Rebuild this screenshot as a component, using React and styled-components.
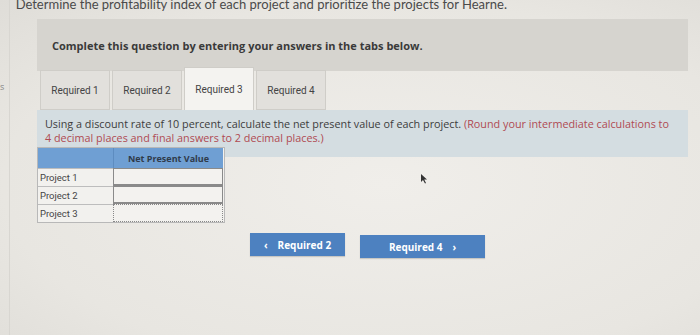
import React from 'react';
import styled, { createGlobalStyle } from 'styled-components';

const Global = createGlobalStyle`
  html, body { margin: 0; padding: 0; }
  body {
    width: 700px;
    height: 335px;
    overflow: hidden;
    background: #e9e7e2;
    font-family: 'Open Sans', 'Liberation Sans', sans-serif;
  }
`;

const Page = styled.div`
  position: relative;
  width: 700px;
  height: 335px;
  overflow: hidden;
  display: flex;
  background: radial-gradient(ellipse at 55% 55%, #f0eeea 0%, #e8e6e1 70%, #dfddd8 100%);
`;

const SideStrip = styled.div`
  width: 10px;
  flex-shrink: 0;
  border-right: 1px solid #d8d6d1;
  display: flex;
  align-items: flex-start;
  padding-top: 80px;
  box-sizing: border-box;
  font-size: 9px;
  color: #888;
`;

const Main = styled.div`
  flex: 1;
  display: flex;
  flex-direction: column;
  padding-left: 27px;
`;

const Intro = styled.div`
  margin-top: -4px;
  width: 470px;
  height: 15px;
  display: flex;
  justify-content: flex-end;
  font-family: 'Lato', 'Open Sans', sans-serif;
  font-size: 13px;
  color: #4a4a4a;
  white-space: nowrap;
`;

const Banner = styled.div`
  margin-top: 8px;
  width: 651px;
  height: 52px;
  background: #d6d4cf;
  display: flex;
  align-items: center;
  padding-left: 15px;
  box-sizing: border-box;
  font-size: 11px;
  font-weight: 700;
  color: #3a3a3a;
`;

const Tabs = styled.div`
  display: flex;
  gap: 2px;
  margin-top: -4px;
  padding-left: 3px;
  align-items: flex-end;
`;

const Tab = styled.div`
  width: 70px;
  height: ${p => (p.$active ? '43px' : '40px')};
  box-sizing: border-box;
  background: ${p => (p.$active ? '#f4f3f0' : '#e2e0dc')};
  border: 1px solid #cfcdc8;
  border-bottom: ${p => (p.$active ? 'none' : '1px solid #cfcdc8')};
  display: flex;
  align-items: center;
  justify-content: center;
  font-size: 10px;
  color: #444;
  font-family: 'Roboto', sans-serif;
`;

const Info = styled.div`
  width: 651px;
  height: 47px;
  background: #d4dde1;
  box-sizing: border-box;
  padding: 7px 8px 0 8px;
  font-size: 10.8px;
  line-height: 13.5px;
  color: #3c3c3c;
  white-space: nowrap;
`;

const Red = styled.span`
  color: #b04a52;
`;

const Table = styled.div`
  margin-top: -10px;
  width: 186px;
  display: grid;
  grid-template-columns: 75px 110px;
  border: 1px solid #b8b8b8;
  background: #f2f1ee;
`;

const HeadCell = styled.div`
  height: 20px;
  background: #6f9fd3;
  font-size: 9px;
  font-weight: 700;
  color: #2f3b4a;
  display: flex;
  align-items: center;
  justify-content: center;
  border-left: ${p => (p.$second ? '1px solid #5d8cc0' : 'none')};
`;

const RowLabel = styled.div`
  height: 17px;
  display: flex;
  align-items: center;
  padding-left: 2px;
  font-size: 9.5px;
  color: #444;
  border-top: 1px solid #bdbdbd;
  font-family: 'Roboto', sans-serif;
`;

const InputCell = styled.div`
  height: 18px;
  box-sizing: border-box;
  border: ${p => (p.$dotted ? '1px dotted #888' : '1px solid #8a8a8a')};
  border-bottom-width: ${p => (p.$dotted ? '1px' : '2px')};
  background: #f3f2ef;
`;

const Buttons = styled.div`
  display: flex;
  gap: 15px;
  margin-top: 10px;
  padding-left: 213px;
`;

const NavButton = styled.div`
  width: ${p => p.$w}px;
  height: 23px;
  margin-top: ${p => p.$dy || 0}px;
  background: #4d81c0;
  color: #fff;
  font-size: 10px;
  font-weight: 700;
  display: flex;
  align-items: center;
  justify-content: center;
  gap: 10px;
  box-shadow: 0 1px 1px rgba(0,0,0,0.15);
`;

const Cursor = styled.svg`
  position: absolute;
  left: 420px;
  top: 174px;
`;

export default function App() {
  return (
    <Page>
      <Global />
      <SideStrip>s</SideStrip>
      <Main>
        <Intro>
          <span>Determine the profitability index of each project and prioritize the projects for Hearne.</span>
        </Intro>
        <Banner>Complete this question by entering your answers in the tabs below.</Banner>
        <Tabs>
          <Tab>Required 1</Tab>
          <Tab>Required 2</Tab>
          <Tab $active>Required 3</Tab>
          <Tab>Required 4</Tab>
        </Tabs>
        <Info>
          Using a discount rate of 10 percent, calculate the net present value of each project.{' '}
          <Red>(Round your intermediate calculations to</Red>
          <br />
          <Red>4 decimal places and final answers to 2 decimal places.)</Red>
        </Info>
        <Table>
          <HeadCell />
          <HeadCell $second>Net Present Value</HeadCell>
          <RowLabel>Project 1</RowLabel>
          <InputCell />
          <RowLabel>Project 2</RowLabel>
          <InputCell />
          <RowLabel>Project 3</RowLabel>
          <InputCell $dotted />
        </Table>
        <Buttons>
          <NavButton $w={95}><span>‹</span><span>Required 2</span></NavButton>
          <NavButton $w={125} $dy={2}><span>Required 4</span><span>›</span></NavButton>
        </Buttons>
      </Main>
      <Cursor width="8" height="10" viewBox="0 0 8 10">
        <path d="M1 0 L1 8 L3 6 L5 9.5 L6 9 L4.2 5.6 L7 5.6 Z" fill="#333" />
      </Cursor>
    </Page>
  );
}
